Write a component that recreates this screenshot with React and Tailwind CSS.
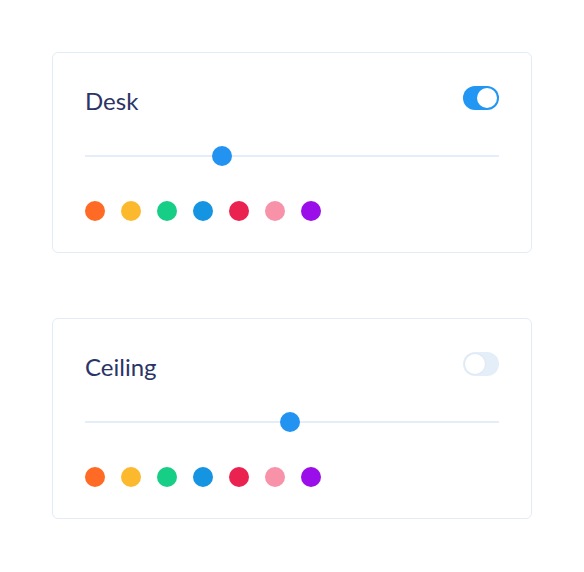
import { useState } from "react";

const colors = ["#ff6a25", "#fdb92d", "#17ce86", "#1594e2", "#ea2250", "#f792a9", "#9a0eea"];

function Toggle({ on, onChange }) {
  return (
    <button
      onClick={onChange}
      className={`relative w-9 h-6 rounded-full transition-colors ${
        on ? "bg-[#2196f3]" : "bg-[#e4eef8]"
      }`}
    >
      <span
        className={`absolute top-0.5 w-5 h-5 rounded-full bg-white transition-all ${
          on ? "left-[14px]" : "left-0.5 shadow-[0_0_0_1px_#dfe9f4]"
        }`}
      />
    </button>
  );
}

function LightCard({ name, initialOn, value }) {
  const [on, setOn] = useState(initialOn);
  return (
    <div className="w-[480px] border border-[#e3ecf5] rounded-md bg-white px-8 pt-[33px] pb-[31px]">
      <div className="flex items-center justify-between h-6">
        <span className="pt-[6px] text-[24px] text-[#2b3466] leading-none font-['Lato',sans-serif]">{name}</span>
        <Toggle on={on} onChange={() => setOn(!on)} />
      </div>
      <div className="relative mt-9 h-5 flex items-center">
        <div className="w-full h-[2px] bg-[#e5eef8]" />
        <div
          className="absolute top-0 w-5 h-5 rounded-full bg-[#2393f2]"
          style={{ left: `calc(${value}% - 10px)` }}
        />
      </div>
      <div className="mt-[35px] flex gap-4">
        {colors.map((c) => (
          <span key={c} className="w-5 h-5 rounded-full" style={{ backgroundColor: c }} />
        ))}
      </div>
    </div>
  );
}

export default function App() {
  return (
    <div className="w-[584px] h-[572px] bg-white flex flex-col items-center pt-[52px] gap-[65px]">
      <LightCard name="Desk" initialOn={true} value={33} />
      <LightCard name="Ceiling" initialOn={false} value={49.5} />
    </div>
  );
}
